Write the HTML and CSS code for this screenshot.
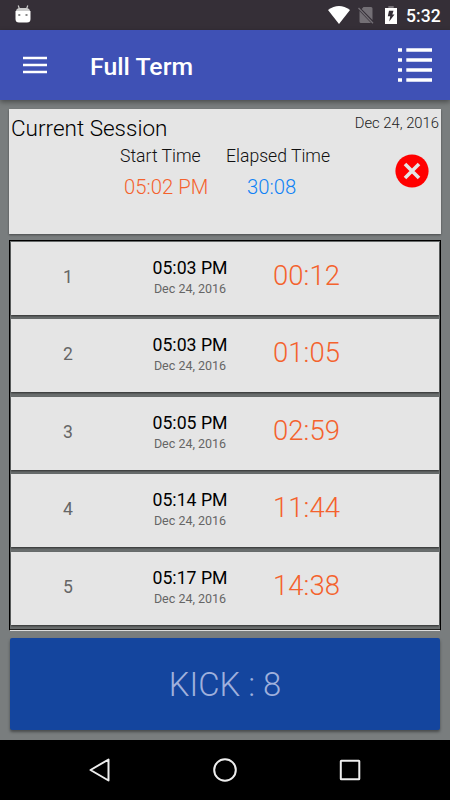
FILE: index.html
```html
<!DOCTYPE html>
<html lang="en">
<head>
  <meta charset="UTF-8"/>
  <meta name="viewport" content="width=device-width,initial-scale=1.0"/>
  <title>Full Term</title>
  <link rel="stylesheet" href="styles.css">
</head>
<body>
  <div class="status-bar">
    <svg class="debug-icon" viewBox="0 0 16 18">
      <path d="M3.200 .5L4.500 4M12.800 .5L11.500 4" stroke="#ccc" stroke-width="1.200"/>
      <path d="M1 6.500Q1 3 5 3h6q4 0 4 3.500z" fill="#ccc"/>
      <path d="M.5 6h15v8q0 3.500-3.500 3.500H4Q.5 17.500.5 14z" fill="#fff"/>
      <path d="M3.300 9h2v2h-2zM10.500 9h2v2h-2z" fill="#888"/>
    </svg>
    <svg class="wifi-icon" viewBox="0 0 22 18"><path d="M0 4Q11-4 22 4L11 18z" fill="#fff"/></svg>
    <svg class="sim-icon" viewBox="0 0 16 18">
      <path d="M5.500 1H13q1.500 0 1.500 1.500V14L3.700 3zM1.500 5L13 17H3q-1.500 0-1.500-1.500z" fill="#736f75"/>
      <path d="M.5 2L15 17.300" stroke="#736f75" stroke-width="1.300"/>
    </svg>
    <svg class="battery-icon" viewBox="0 0 12 18">
      <path d="M3.300 0h5.400v2H3.300z" fill="#777278"/>
      <path d="M0 2h12v16H0z" fill="#fff"/>
      <path d="M4 4.700h4.500L7.300 8.500h2.200L4.200 15.500l1-5.200H2.800z" fill="#352f37"/>
    </svg>
    <span class="clock">5:32</span>
  </div>

  <div class="app-bar">
    <svg class="menu-icon" viewBox="0 0 24 18"><path d="M0 2h24M0 9h24M0 16h24" stroke="#fff" stroke-width="2.600"/></svg>
    <span class="title">Full Term</span>
    <svg class="list-icon" viewBox="0 0 34 36">
      <path d="M0 3h4M0 13h4M0 23h4M0 33h4M8.300 3H34M8.300 13H34M8.300 23H34M8.300 33H34" stroke="#fff" stroke-width="3.500"/>
    </svg>
  </div>

  <div class="content">
    <div class="session">
      <div class="session-head">
        <span class="session-title">Current Session</span>
        <span class="session-date">Dec 24, 2016</span>
      </div>
      <div class="session-body">
        <div class="stat start">
          <span class="label">Start Time</span>
          <span class="value orange">05:02 PM</span>
        </div>
        <div class="stat elapsed">
          <span class="label">Elapsed Time</span>
          <span class="value blue">30:08</span>
        </div>
        <svg class="cancel-icon" viewBox="0 0 34 34">
          <circle cx="17" cy="17" r="16.600" fill="#f00"/>
          <path d="M10 10l14 14M24 10L10 24" stroke="#e5e5e5" stroke-width="3.600"/>
        </svg>
      </div>
    </div>

    <div class="kicks">
      <div class="kick">
        <span class="num">1</span>
        <div class="when"><span class="time">05:03 PM</span><span class="date">Dec 24, 2016</span></div>
        <span class="offset">00:12</span>
      </div>
      <div class="kick">
        <span class="num">2</span>
        <div class="when"><span class="time">05:03 PM</span><span class="date">Dec 24, 2016</span></div>
        <span class="offset">01:05</span>
      </div>
      <div class="kick">
        <span class="num">3</span>
        <div class="when"><span class="time">05:05 PM</span><span class="date">Dec 24, 2016</span></div>
        <span class="offset">02:59</span>
      </div>
      <div class="kick">
        <span class="num">4</span>
        <div class="when"><span class="time">05:14 PM</span><span class="date">Dec 24, 2016</span></div>
        <span class="offset">11:44</span>
      </div>
      <div class="kick">
        <span class="num">5</span>
        <div class="when"><span class="time">05:17 PM</span><span class="date">Dec 24, 2016</span></div>
        <span class="offset">14:38</span>
      </div>
    </div>

    <button class="kick-btn">KICK : 8</button>
  </div>

  <div class="nav-bar">
    <svg viewBox="0 0 24 24"><path d="M20.500 1.500v21L2.500 12z"/></svg>
    <svg viewBox="0 0 24 24"><circle cx="12" cy="12" r="10.800"/></svg>
    <svg viewBox="0 0 24 24"><rect x="2.800" y="2.800" width="18.500" height="18.500" rx=".5"/></svg>
  </div>
</body>
</html>
```
FILE: styles.css
```css
* { box-sizing:border-box; }
body {
  margin:0; height:800px; display:flex; flex-direction:column; overflow:hidden;
  font-family:Roboto,"Liberation Sans",sans-serif; background:#797d7e; color:#000;
}
svg { display:block; flex:none; }

.status-bar { height:30px; flex:none; display:flex; align-items:center; padding:0 10px 0 15px; background:#352f37; }
.debug-icon { width:16px; height:18px; margin-top:-2px; }
.wifi-icon { width:22px; height:18px; margin-left:auto; }
.sim-icon { width:16px; height:18px; margin-left:8px; }
.battery-icon { width:12px; height:18px; margin-left:11px; }
.clock { margin-left:9px; width:34px; color:#fff; font-size:17.600px; font-weight:500; line-height:30px; padding-top:2px; white-space:nowrap; }

.app-bar {
  height:70px; flex:none; display:flex; align-items:center; padding:0 18px 0 23px;
  background:#3f51b5; box-shadow:0 2px 5px #0006;
}
.menu-icon { width:24px; height:18px; margin-top:-1px; }
.title { margin-left:43px; color:#fff; font-size:24.800px; font-weight:500; line-height:30px; padding-top:4px; }
.list-icon { width:34px; height:36px; margin-left:auto; }

.content { flex:1; display:flex; flex-direction:column; padding:9px 9px 10px; }
.session { height:125px; flex:none; padding:0 2px; background:#e5e5e5; box-shadow:0 1px 2px #0006; }
.session-head { height:35px; display:flex; justify-content:space-between; font-weight:300; }
.session-title { font-size:22.500px; line-height:38px; }
.session-date { font-size:14.800px; line-height:28px; color:#222; }
.session-body { display:flex; align-items:flex-start; }
.stat { display:flex; flex-direction:column; font-weight:300; white-space:nowrap; }
.start { margin-left:109px; width:106px; }
.elapsed { width:150px; }
.label { font-size:17.600px; line-height:24px; color:#111; }
.value { font-size:20.300px; line-height:24px; margin-top:7px; }
.start .value { padding-left:4px; }
.elapsed .value { padding-left:21px; }
.orange { color:#f4622d; }
.blue { color:#0f82f5; }
.cancel-icon { width:34px; height:34px; margin:10px 10px 0 auto; }

.kicks {
  height:391px; flex:none; margin-top:6px; padding:1px; display:flex; flex-direction:column; gap:4.400px;
  border:1px solid #000; border-bottom-color:#ddd; background:#6c7070; box-shadow:inset 0 -1px #222;
}
.kick {
  height:73px; flex:none; display:grid; grid-template-columns:114px 130px 103px; align-items:start;
  background:#e5e5e5; text-align:center; box-shadow:0 1px 2px #0009;
}
.num { font-size:17.600px; line-height:22px; margin-top:24px; color:#666; }
.when { display:flex; flex-direction:column; margin-top:15px; }
.time { font-size:17.700px; line-height:22px; }
.date { font-size:12.500px; line-height:20px; color:#666; }
.offset { font-size:27.500px; font-weight:300; line-height:34px; margin-top:17px; color:#f4622d; }

.kick-btn {
  height:92px; flex:none; margin:7px 1px 0; padding:2px 0 0; border:0; border-radius:2px; background:#14459e;
  color:#9fb0dc; font-family:inherit; font-size:32.800px; font-weight:300; box-shadow:0 2px 3px #0006;
}

.nav-bar { height:60px; flex:none; display:flex; align-items:center; justify-content:center; gap:101px; background:#000; }
.nav-bar svg { width:24px; height:24px; fill:none; stroke:#eee; stroke-width:2; stroke-linejoin:round; }
```
